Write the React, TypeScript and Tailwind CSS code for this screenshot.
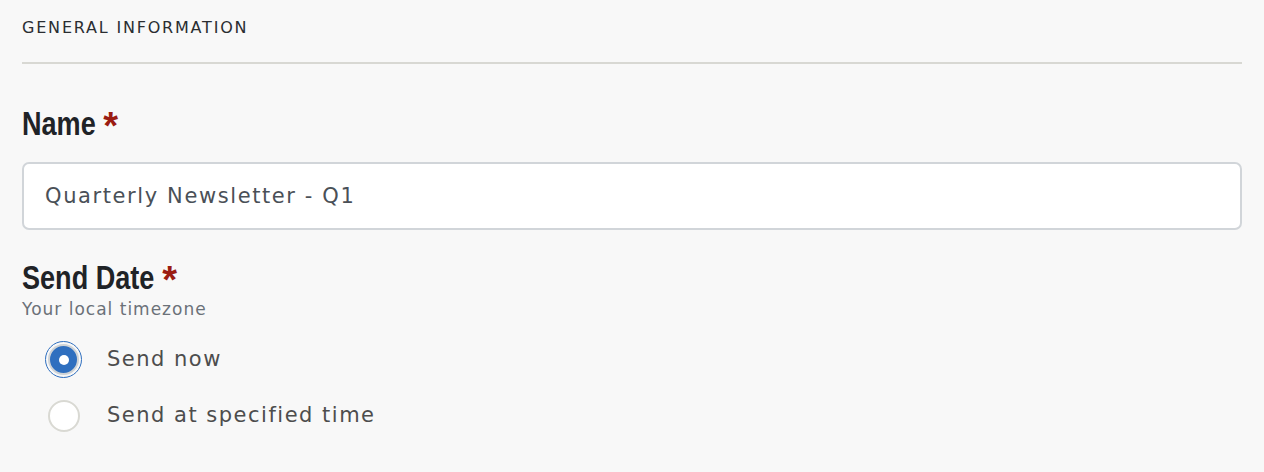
import React, { useState } from 'react';

const BODY = { fontFamily: '"DejaVu Sans", "Liberation Sans", sans-serif' };
const HEAD = { fontFamily: '"Liberation Sans", Arial, sans-serif' };

const SEND_OPTIONS = [
  { key: 'now', label: 'Send now' },
  { key: 'scheduled', label: 'Send at specified time' },
];

const Radio: React.FC<{ checked: boolean }> = ({ checked }) =>
  checked ? (
    <span className="flex h-[37px] w-[37px] items-center justify-center rounded-full border-[1.5px] border-[#2f6fbf]">
      <span className="flex h-[31px] w-[31px] items-center justify-center rounded-full border-2 border-[#cfd3d6] bg-[#2f6fbf]">
        <span className="h-[10px] w-[10px] rounded-full bg-white" />
      </span>
    </span>
  ) : (
    <span className="flex h-[37px] w-[37px] items-center justify-center">
      <span className="h-[32px] w-[32px] rounded-full border-2 border-[#d9d9d3] bg-white" />
    </span>
  );

// condensed heading: Liberation Sans squeezed, asterisk counter-scaled back to normal width
const FieldLabel: React.FC<{ children: React.ReactNode }> = ({ children }) => (
  <label className="block h-[40px] text-[33px] font-bold leading-[40px] text-[#1f2327]" style={HEAD}>
    <span className="inline-block origin-left scale-x-[0.82] whitespace-nowrap">
      {children}{' '}
      <span className="relative top-[4px] inline-block origin-left scale-x-[1.22] text-[38px] leading-[28px] text-[#9b1c12]">*</span>
    </span>
  </label>
);

export default function App() {
  const [sendMode, setSendMode] = useState('now');

  return (
    <div className="min-h-screen bg-[#f8f8f8] px-[22px] text-[#212529]" style={BODY}>
      <div className="border-b-2 border-[#d8d8d3] pt-[16px] pb-[22px] text-[16px] leading-[24px] tracking-[1.8px] text-[#2a2d31]">
        GENERAL INFORMATION
      </div>

      <div className="mt-[40px]">
        <FieldLabel>Name</FieldLabel>
      </div>
      <input
        className="mt-[18px] block h-[68px] w-full rounded-[7px] border-2 border-[#d1d5d9] bg-white px-[21px] text-[21px] tracking-[1.6px] text-[#4a5057] outline-none"
        style={BODY}
        defaultValue="Quarterly Newsletter - Q1"
      />

      <div className="mt-[28px]">
        <FieldLabel>Send Date</FieldLabel>
      </div>
      <div className="text-[17px] leading-[22px] tracking-[1px] text-[#6b7178]">Your local timezone</div>

      <div className="mt-[21px] flex flex-col gap-[19px] pl-[23px]">
        {SEND_OPTIONS.map(opt => (
          <button
            key={opt.key}
            onClick={() => setSendMode(opt.key)}
            className="flex items-center gap-[25px] text-left text-[21px] tracking-[1.5px] text-[#4d4d4d]"
          >
            <Radio checked={sendMode === opt.key} />
            <span>{opt.label}</span>
          </button>
        ))}
      </div>
    </div>
  );
}
